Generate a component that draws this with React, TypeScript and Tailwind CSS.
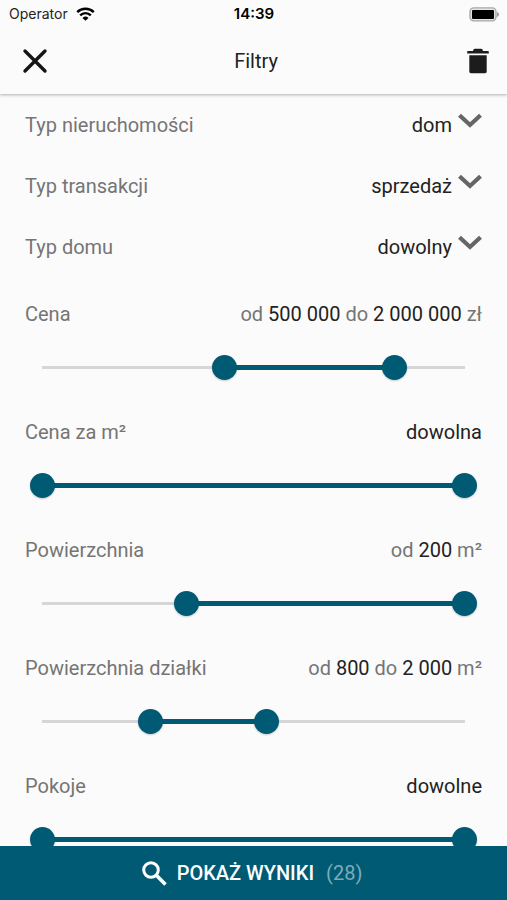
import React, { useState } from 'react';

interface SelectFilter {
  id: string;
  label: string;
  options: string[];
}

interface RangeFilter {
  id: string;
  label: string;
  from: number;
  to: number;
  value: React.ReactNode;
}

const Strong = ({ children }: { children: React.ReactNode }) => (
  <span className="text-[#222222]">{children}</span>
);

const selectFilters: SelectFilter[] = [
  { id: 'property', label: 'Typ nieruchomości', options: ['dom', 'mieszkanie', 'działka'] },
  { id: 'transaction', label: 'Typ transakcji', options: ['sprzedaż', 'wynajem'] },
  { id: 'house', label: 'Typ domu', options: ['dowolny', 'wolnostojący', 'bliźniak'] },
];

// from / to are positions on a 0-1000 scale
const rangeFilters: RangeFilter[] = [
  {
    id: 'price',
    label: 'Cena',
    from: 431,
    to: 833,
    value: <>od <Strong>500 000</Strong> do <Strong>2 000 000</Strong> zł</>,
  },
  { id: 'price-m2', label: 'Cena za m²', from: 0, to: 1000, value: <Strong>dowolna</Strong> },
  { id: 'area', label: 'Powierzchnia', from: 341, to: 1000, value: <>od <Strong>200</Strong> m²</> },
  {
    id: 'plot',
    label: 'Powierzchnia działki',
    from: 255,
    to: 530,
    value: <>od <Strong>800</Strong> do <Strong>2 000</Strong> m²</>,
  },
  { id: 'rooms', label: 'Pokoje', from: 0, to: 1000, value: <Strong>dowolne</Strong> },
];

const thumbClass =
  'pointer-events-none absolute inset-0 h-full w-full appearance-none bg-transparent [&::-webkit-slider-thumb]:pointer-events-auto [&::-webkit-slider-thumb]:h-[25px] [&::-webkit-slider-thumb]:w-[25px] [&::-webkit-slider-thumb]:appearance-none [&::-webkit-slider-thumb]:rounded-full [&::-webkit-slider-thumb]:bg-[#005a74] [&::-webkit-slider-thumb]:shadow-[0_1px_2px_rgba(0,0,0,0.2)]';

const StatusBar = () => (
  <div className="grid h-7 grid-cols-3 items-center pl-[9px] pr-2 font-['Inter',sans-serif] text-black">
    <div className="flex items-center gap-2">
      <span className="text-sm text-[#222222]">Operator</span>
      <svg width="19" height="14" viewBox="0 0 19 14" fill="none" stroke="black" strokeWidth="2.4" aria-hidden="true">
        <path d="M1.2 5.1a11.8 11.8 0 0 1 16.6 0" />
        <path d="M4.2 8.3a7.5 7.5 0 0 1 10.6 0" />
        <path d="M9.5 13.8 6.5 10.9a4.3 4.3 0 0 1 6 0Z" fill="black" stroke="none" />
      </svg>
    </div>
    <span className="text-center text-[15px] font-semibold">14:39</span>
    <svg className="justify-self-end" width="30" height="15" viewBox="0 0 30 15" aria-hidden="true">
      <rect x="1" y="0.9" width="26" height="13" rx="3.8" fill="#e4e4e4" stroke="#a8a8a8" strokeWidth="1.4" />
      <rect x="3" y="2.9" width="22" height="9" rx="1" fill="black" />
      <path d="M28 5v5c1.2-.6 2-1.4 2-2.5s-.8-1.900-2-2.500Z" fill="#9c9c9c" />
    </svg>
  </div>
);

const SelectRow = ({ id, label, options }: SelectFilter) => (
  <div className="flex h-[61px] items-center justify-between">
    <label htmlFor={id}>{label}</label>
    <div className="flex items-center gap-[6px]">
      <select id={id} className="field-sizing-content appearance-none bg-transparent text-right text-[#222222] outline-none">
        {options.map((option) => (
          <option key={option}>{option}</option>
        ))}
      </select>
      <svg className="mb-2" width="24" height="15" viewBox="0 0 24 15" fill="none" stroke="#666666" strokeWidth="4.2" aria-hidden="true">
        <path d="M1.500 2.200 12 12 22.500 2.200" />
      </svg>
    </div>
  </div>
);

const RangeRow = ({ id, label, from: initialFrom, to: initialTo, value }: RangeFilter) => {
  const [from, setFrom] = useState(initialFrom);
  const [to, setTo] = useState(initialTo);

  return (
    <div className="h-[118px]">
      <div className="flex justify-between">
        <span id={`${id}-label`}>{label}</span>
        <span>{value}</span>
      </div>
      <div className="relative mx-[5px] mt-7 flex h-[26px] items-center px-3">
        {/* Track */}
        <div className="flex h-[3px] w-full items-center bg-[#d6d6d6]">
          <div
            className="h-[5px] bg-[#005a74]"
            style={{ marginLeft: `${from / 10}%`, width: `${(to - from) / 10}%` }}
          />
        </div>
        {/* Thumbs */}
        <input
          type="range"
          min={0}
          max={1000}
          value={from}
          onChange={(e) => setFrom(Math.min(Number(e.target.value), to))}
          aria-labelledby={`${id}-label`}
          className={thumbClass}
        />
        <input
          type="range"
          min={0}
          max={1000}
          value={to}
          onChange={(e) => setTo(Math.max(Number(e.target.value), from))}
          aria-labelledby={`${id}-label`}
          className={thumbClass}
        />
      </div>
    </div>
  );
};

const App: React.FC = () => (
  <div className="flex h-screen flex-col bg-[#fbfbfb] font-['Roboto',sans-serif] text-[20px] leading-6 text-[#757575]">
    <header className="relative z-10 bg-[#fbfbfb] shadow-[0_1px_3px_rgba(0,0,0,0.3)]">
      <StatusBar />
      <div className="grid h-[66px] grid-cols-3 items-center pl-[22px] pr-[17px]">
        <button type="button" aria-label="Zamknij" className="justify-self-start">
          <svg width="26" height="26" viewBox="0 0 26 26" stroke="#151515" strokeWidth="3.4" strokeLinecap="round">
            <path d="M3 3 23 23M23 3 3 23" />
          </svg>
        </button>
        <h1 className="text-center text-[#222222]">Filtry</h1>
        <button type="button" aria-label="Wyczyść" className="justify-self-end">
          <svg width="24" height="26" viewBox="0 0 24 26" fill="#1c1c1c">
            <path d="M7.500 1.600C7.800 1 8.300.8 9 .8h6c.7 0 1.200.2 1.500.8l.5 1.400h5c.5 0 .8.3.8.8v1.600H1.200V3.800c0-.5.3-.8.8-.8h5Z" />
            <path d="M3.300 7.200h17.400v16.300c0 1-.8 1.700-1.700 1.700H5c-.9 0-1.700-.7-1.700-1.700Z" />
          </svg>
        </button>
      </div>
    </header>

    <main className="min-h-0 flex-1 overflow-y-auto px-[25px] [scrollbar-width:none]">
      {selectFilters.map((filter) => (
        <SelectRow key={filter.id} {...filter} />
      ))}
      <div className="pt-[25px]">
        {rangeFilters.map((filter) => (
          <RangeRow key={filter.id} {...filter} />
        ))}
      </div>
    </main>

    <button type="button" className="relative z-10 flex h-[54px] shrink-0 items-center justify-center bg-[#005a74] pr-1 text-white">
      <svg className="mr-[10px]" width="26" height="26" viewBox="0 0 26 26" fill="none" stroke="white" strokeWidth="3" aria-hidden="true">
        <circle cx="10" cy="10" r="7.3" />
        <path d="M15.300 15.300 24.500 24.500" strokeWidth="3.6" />
      </svg>
      <span className="font-medium">POKAŻ WYNIKI</span>
      <span className="ml-3 text-[#7fabb9]">(28)</span>
    </button>
  </div>
);

export default App;
